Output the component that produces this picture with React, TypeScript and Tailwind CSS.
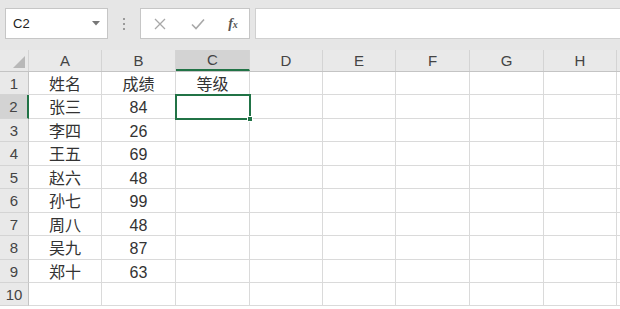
import React from 'react'

const COLS = [
  { label: 'A', w: 'w-[73px]' },
  { label: 'B', w: 'w-[74px]' },
  { label: 'C', w: 'w-[74px]' },
  { label: 'D', w: 'w-[73px]' },
  { label: 'E', w: 'w-[73px]' },
  { label: 'F', w: 'w-[74px]' },
  { label: 'G', w: 'w-[74px]' },
  { label: 'H', w: 'w-[73px]' },
]

const ROW_H = ['h-[23px]', 'h-[24px]', 'h-[23px]', 'h-[24px]', 'h-[23px]', 'h-[24px]', 'h-[23px]', 'h-[24px]', 'h-[23px]', 'h-[23px]']

const DATA: [string, string, string][] = [
  ['姓名', '成绩', '等级'],
  ['张三', '84', ''],
  ['李四', '26', ''],
  ['王五', '69', ''],
  ['赵六', '48', ''],
  ['孙七', '99', ''],
  ['周八', '48', ''],
  ['吴九', '87', ''],
  ['郑十', '63', ''],
  ['', '', ''],
]

const font = "font-['Liberation_Sans','Noto_Sans_CJK_SC',sans-serif]"

function Toolbar() {
  return (
    <div className="h-[50px] bg-[#e6e6e6] flex items-start pt-[8px]">
      {/* Name box */}
      <div className="ml-[5px] w-[103px] h-[31px] bg-white border border-[#c6c6c6] flex items-center pl-[7px] pr-[7px]">
        <span className="text-[13px] text-[#222] flex-1">C2</span>
        <svg width="8" height="5" viewBox="0 0 8 5">
          <path d="M0 0 L8 0 L4 4.5 Z" fill="#777" />
        </svg>
      </div>

      {/* dots */}
      <div className="ml-[15px] mr-[15px] h-[31px] flex flex-col items-center justify-center gap-[3px]">
        <div className="w-[2px] h-[2px] bg-[#9a9a9a]" />
        <div className="w-[2px] h-[2px] bg-[#9a9a9a]" />
        <div className="w-[2px] h-[2px] bg-[#9a9a9a]" />
      </div>

      {/* cancel / enter / fx */}
      <div className="w-[110px] h-[31px] bg-white border border-[#c6c6c6] flex items-center">
        <div className="w-[38px] flex justify-center">
          <svg width="12" height="12" viewBox="0 0 12 12">
            <path d="M1 1 L11 11 M11 1 L1 11" stroke="#a8a8a8" strokeWidth="1.3" />
          </svg>
        </div>
        <div className="w-[38px] flex justify-center">
          <svg width="14" height="12" viewBox="0 0 14 12">
            <path d="M1 6.5 L5 10.5 L13 1.5" stroke="#a8a8a8" strokeWidth="1.6" fill="none" />
          </svg>
        </div>
        <div className="flex-1 flex justify-center">
          <span className="font-['Liberation_Serif',serif] italic font-bold text-[14px] text-[#555] leading-none">
            f<span className="text-[10px]">x</span>
          </span>
        </div>
      </div>

      {/* formula input */}
      <div className="ml-[5px] flex-1 h-[31px] bg-white border border-[#d0d0d0] border-r-0" />
    </div>
  )
}

export default function App() {
  return (
    <div className={`w-[620px] h-[309px] overflow-hidden bg-white relative ${font}`}>
      <Toolbar />

      {/* column headers */}
      <div className="flex h-[22px] bg-[#e9e9e9] border-b border-[#c4c4c4]">
        <div className="w-[29px] shrink-0 border-r border-[#d4d4d4] relative">
          <svg className="absolute right-[3px] bottom-[3px]" width="12" height="12" viewBox="0 0 12 12">
            <path d="M12 0 L12 12 L0 12 Z" fill="#b8b8b8" />
          </svg>
        </div>
        {COLS.map(c => (
          <div
            key={c.label}
            className={`${c.w} shrink-0 flex items-center justify-center pt-[1px] text-[15px] text-[#444] border-r border-[#d4d4d4] ${
              c.label === 'C' ? 'bg-[#d3d3d3] border-b-2 border-b-[#217346] text-[#2b2b2b]' : ''
            }`}
          >
            {c.label}
          </div>
        ))}
        <div className="flex-1" />
      </div>

      {/* rows */}
      {DATA.map((row, i) => (
        <div key={i} className={`flex ${ROW_H[i]}`}>
          <div
            className={`w-[29px] shrink-0 flex items-center justify-center pt-[2px] text-[15px] text-[#444] border-b border-[#d4d4d4] ${
              i === 1 ? 'bg-[#d3d3d3] border-r-2 border-r-[#217346]' : 'bg-[#e9e9e9] border-r border-r-[#c4c4c4]'
            }`}
          >
            {i + 1}
          </div>
          {COLS.map((c, j) => (
            <div
              key={c.label}
              className={`${c.w} shrink-0 flex items-center justify-center pt-[3px] text-[16px] text-[#333] border-r border-b border-[#dadada]`}
            >
              {j < 3 ? row[j] : ''}
            </div>
          ))}
          <div className="flex-1 border-b border-[#dadada]" />
        </div>
      ))}

      {/* active cell C2 */}
      <div className="absolute left-[175px] top-[94px] w-[76px] h-[26px] border-2 border-[#217346]">
        <div className="absolute right-[-4px] bottom-[-4px] w-[6px] h-[6px] bg-[#217346] border border-white" />
      </div>
    </div>
  )
}
